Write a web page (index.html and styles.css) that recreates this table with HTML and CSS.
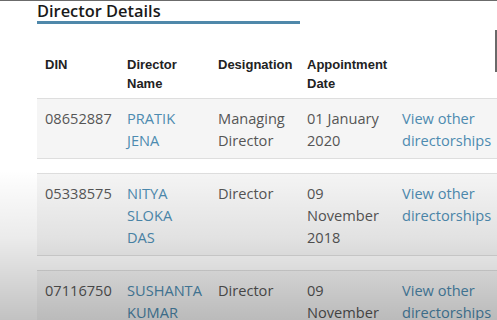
FILE: index.html
```html
<!DOCTYPE html>
<html>
<head>
<meta charset="utf-8">
<link rel="stylesheet" href="styles.css">
</head>
<body>
<div class="page">
  <div class="topline"></div>
  <section class="details">
    <h2 class="title">Director Details</h2>
    <table class="dir-table">
      <thead>
        <tr>
          <th class="c1">DIN</th>
          <th class="c2">Director<br>Name</th>
          <th class="c3">Designation</th>
          <th class="c4">Appointment<br>Date</th>
          <th class="c5"></th>
        </tr>
      </thead>
      <tbody>
        <tr class="row">
          <td>08652887</td>
          <td><a class="link">PRATIK<br>JENA</a></td>
          <td>Managing<br>Director</td>
          <td>01 January<br>2020</td>
          <td><a class="link">View other<br>directorships</a></td>
        </tr>
        <tr class="spacer"><td colspan="5"></td></tr>
        <tr class="row">
          <td>05338575</td>
          <td><a class="link">NITYA<br>SLOKA<br>DAS</a></td>
          <td>Director</td>
          <td>09<br>November<br>2018</td>
          <td><a class="link">View other<br>directorships</a></td>
        </tr>
        <tr class="spacer"><td colspan="5"></td></tr>
        <tr class="row">
          <td>07116750</td>
          <td><a class="link">SUSHANTA<br>KUMAR</a></td>
          <td>Director</td>
          <td>09<br>November<br>2018</td>
          <td><a class="link">View other<br>directorships</a></td>
        </tr>
      </tbody>
    </table>
  </section>
  <div class="scrollbar"></div>
  <div class="shade"></div>
</div>
</body>
</html>
```

FILE: styles.css
```css
html, body {
  margin: 0;
  padding: 0;
  background: #ffffff;
}
.page {
  position: relative;
  width: 497px;
  height: 320px;
  overflow: hidden;
  font-family: "Open Sans", sans-serif;
}
.topline {
  height: 1px;
  background: #6b6b6b;
}
.details {
  padding-left: 37px;
}
.title {
  margin: 0;
  width: 263px;
  font-size: 16.4px;
  font-weight: 600;
  line-height: 20px;
  color: #1a1a1a;
  border-bottom: 3px solid #4f88aa;
}
.dir-table {
  margin-top: 30px;
  border-collapse: separate;
  border-spacing: 0;
  width: 470px;
  table-layout: fixed;
}
th, td {
  box-sizing: border-box;
}
.c1 { width: 82px; }
.c2 { width: 91px; }
.c3 { width: 89px; }
.c4 { width: 95px; }
.c5 { width: 113px; }
th {
  font-family: "Liberation Sans", Arial, sans-serif;
  font-weight: 700;
  font-size: 13px;
  line-height: 19px;
  color: #222;
  text-align: left;
  vertical-align: top;
  padding: 1px 8px 5px 8px;
  white-space: nowrap;
}
.row td {
  background: #f5f5f5;
  border-top: 1px solid #dedede;
  border-bottom: 1px solid #dedede;
  font-size: 14.6px;
  line-height: 22px;
  color: #555555;
  vertical-align: top;
  padding: 8px 8px 7px 8px;
  white-space: nowrap;
}
.spacer td {
  height: 14px;
  padding: 0;
}
.link {
  color: #4d8bb0;
  text-decoration: none;
}
.scrollbar {
  position: absolute;
  right: 0;
  top: 30px;
  width: 2px;
  height: 42px;
  background: #6a6a6a;
}
.shade {
  position: absolute;
  left: 0;
  right: 0;
  top: 170px;
  bottom: 0;
  background: linear-gradient(to bottom, rgba(0,0,0,0) 0%, rgba(0,0,0,0.08) 45%, rgba(0,0,0,0.24) 100%);
  pointer-events: none;
}
```
